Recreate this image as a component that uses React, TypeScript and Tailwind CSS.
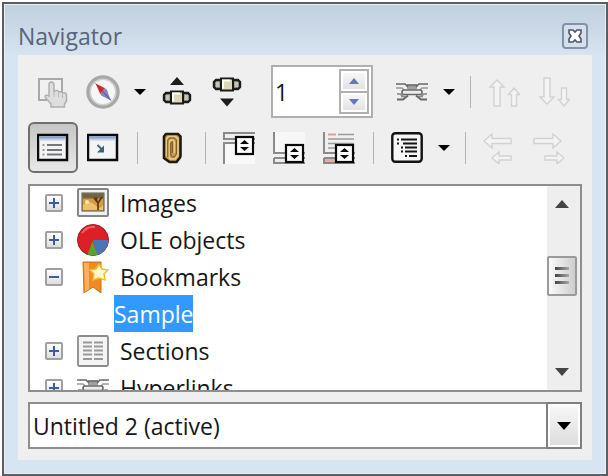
import * as React from "react";
import { clsx } from "clsx";

type IconProps = { className?: string; children: React.ReactNode };

function Icon({ className, children }: IconProps) {
  return (
    <svg
      viewBox="0 0 32 32"
      fill="none"
      aria-hidden="true"
      className={clsx("size-8 shrink-0", className)}
    >
      {children}
    </svg>
  );
}

function ToggleIcon() {
  return (
    <Icon>
      <rect x="2" y="3" width="23" height="21" fill="#f1f1f1" stroke="#a8a8a8" strokeWidth="2" />
      <path
        d="M12 20V9q0-3 2.500-3T17 9v7q1-2 3-1.500t2 1.500q2-1 3.500 1 3.500-1 4 2v6l-2 3v3H14v-3l-6-7q0-3 4-1z"
        fill="#dedede"
        stroke="#b0b0b0"
        strokeWidth="1.500"
      />
      <path d="M17 16v5M21.500 17v4M25.500 18v4" stroke="#b8b8b8" />
    </Icon>
  );
}

function CompassIcon() {
  return (
    <Icon className="size-[34px]">
      <circle cx="16" cy="16" r="14" fill="#f6f6f6" stroke="#a8a8a8" strokeWidth="3.500" />
      <circle cx="16" cy="16" r="12" stroke="#d0d0d0" strokeWidth="1.500" />
      <path d="M9 8l9 4.500-4.500 5.500z" fill="#dd2a2c" />
      <path d="M19 13l4.500 11L14 19z" fill="#6f8ac6" />
      <path d="M13.500 18l4.500-5.500 2.500 3-3.500 5z" fill="#7f86c0" />
      <path d="M9 8l14.500 16" stroke="#7b2b40" strokeWidth=".7" />
    </Icon>
  );
}

function Barrel() {
  return (
    <>
      <path d="M5 3h22l2 2v5l-2 2H5l-2-2V5z" fill="#a5a596" stroke="#1c1c1c" strokeWidth="2.400" />
      <path d="M5 5h3v5H5zM24 5h3v5h-3z" fill="#c4c4bc" />
      <rect x="10" y="1.500" width="12" height="12" fill="#ddd7ba" stroke="#1a1a1a" strokeWidth="2" />
      <path d="M12 11.500V3.500h7" stroke="#fffdf0" strokeWidth="2" />
    </>
  );
}

function PreviousIcon() {
  return (
    <Icon>
      <path d="M16 1l7 8H9z" fill="#1d1d1d" />
      <g transform="translate(0 14)">
        <Barrel />
      </g>
    </Icon>
  );
}

function NextIcon() {
  return (
    <Icon>
      <g transform="translate(0 1)">
        <Barrel />
      </g>
      <path d="M16 30.500l-7-8h14z" fill="#1d1d1d" />
    </Icon>
  );
}

function ChainIcon() {
  return (
    <Icon>
      <path d="M11 8.500h10v5H11z" fill="#a0a0a0" />
      <g stroke="#686868" strokeWidth="1.600">
        <path d="M0 8h9l3 3M32 8h-9l-3 3M11 9h10" />
        <path d="M0 12h6l2 2M32 12h-6l-2 2" stroke="#999" />
        <rect x="6" y="14" width="20" height="4.500" rx="2" fill="#ececec" />
        <path d="M1 18h3l3 2M31 18h-3l-3 2" stroke="#888" />
        <path d="M1 23.500h6l5-4M31 23.500h-6l-5-4" strokeWidth="2" />
        <path d="M5 20.500h5M27 20.500h-5" stroke="#888" />
      </g>
    </Icon>
  );
}

const arrowShapes = {
  up: "M9 4l7 7h-4v19H6V11H2zM26 12l5.500 6.500h-3V30h-5V18.500h-3z",
  down: "M9 28l7-7h-4V2H6v19H2zM26 30l5.500-6.500h-3V12h-5v11.500h-3z",
  left: "M1 9l8-7v4.500h19v5H9V16zM9 26l7-6v4h12v4H16v4z",
  right: "M28 9l-8-7v4.500H1v5h19V16zM31 26l-7-6v4H12v4h12v4z",
};

function ArrowPair({ direction }: { direction: keyof typeof arrowShapes }) {
  return (
    <Icon>
      <path d={arrowShapes[direction]} fill="#f4f4f4" stroke="#d2d2d2" strokeWidth="1.400" />
    </Icon>
  );
}

function PaneFrame() {
  return (
    <>
      <rect x="1" y="3" width="29" height="25" fill="#f2f4f6" stroke="#0b0b0b" strokeWidth="2.500" />
      <path d="M2.500 5.500h26" stroke="#8da5c8" strokeWidth="2.500" />
      <path d="M2.500 7.800h26" stroke="#c4d0e0" strokeWidth="1.500" />
    </>
  );
}

function ListBoxIcon() {
  return (
    <Icon>
      <PaneFrame />
      <path d="M10 13h15M10 18h15M10 22.500h15" stroke="#777" strokeWidth="1.800" />
      <path d="M5.500 13h2M5.500 18h2M5.500 22.500h2" stroke="#999" strokeWidth="1.800" />
    </Icon>
  );
}

function ContentViewIcon() {
  return (
    <Icon>
      <PaneFrame />
      <path d="M10.500 13l5 5" stroke="#44677f" strokeWidth="2" />
      <path d="M17 13.500v7h-7z" fill="#3d6079" />
    </Icon>
  );
}

function ReminderIcon() {
  return (
    <Icon>
      <path
        d="M11 2h12l2.500 2.500V24q0 2-2 3.500l-2 2.500h-7l-5.500-4V4.500z"
        fill="#c9a05a"
        stroke="#1f1a12"
        strokeWidth="2.600"
      />
      <path
        d="M11.500 24V7l2-2.500h7L23 7v16l-3 4h-4.500l-1.500-2V10.500L16 8h2l1.500 2.500V21"
        stroke="#ecc987"
        strokeWidth="1.500"
      />
      <path d="M12.800 25V8l1.500-2h5l2 2v14l-2 3h-2l-1.500-2V11l1.500-1.500V21" stroke="#6e5222" />
    </Icon>
  );
}

function StepBox({ x, y }: { x: number; y: number }) {
  return (
    <g transform={`translate(${x} ${y})`}>
      <rect x="1" y="1" width="17" height="17" fill="#fff" stroke="#080808" strokeWidth="2.200" />
      <path d="M9.500 4L14 8H5zM9.500 15L14 11H5z" fill="#080808" />
    </g>
  );
}

function HeaderIcon() {
  return (
    <Icon>
      <path d="M2 11h30v21H2z" fill="#f8f8f8" />
      <path d="M1 7V1h31M0 7h32M1 32V11h31" stroke="#8a8a8a" strokeWidth="2" />
      <StepBox x={12} y={4} />
    </Icon>
  );
}

function FooterIcon() {
  return (
    <Icon>
      <path d="M2 0h30v20H2z" fill="#f7f7f7" />
      <path d="M1 0v21h31M1 26h31M1 26v5h31" stroke="#8a8a8a" strokeWidth="2" />
      <StepBox x={12} y={12} />
    </Icon>
  );
}

function AnchorTextIcon() {
  return (
    <Icon>
      <path d="M1 0v21h31M1 26h31M1 26v5h31" stroke="#8a8a8a" strokeWidth="2" />
      <path d="M5 2.500h8" stroke="#d9a098" strokeWidth="2" />
      <path d="M15 2.500h16M5 7h26M5 11.500h26M5 16h8" stroke="#9b9b9b" strokeWidth="1.700" />
      <path d="M2 27h11v3H2z" fill="#e6aca3" />
      <StepBox x={12} y={12} />
    </Icon>
  );
}

function HeadingLevelsIcon() {
  return (
    <Icon>
      <rect x="1.300" y="1.300" width="29.400" height="28.400" rx="3" fill="#f5f5f5" stroke="#111" strokeWidth="2.400" />
      <g stroke="#151515" strokeWidth="1.800">
        <path d="M6 7.500h2M10 7.500h16M6 11.500h2M12 11.500h14" />
        <path d="M10 15.500h2M14 15.500h12M10 19.500h2M14 19.500h12M14 24h2M18 24h8" />
      </g>
    </Icon>
  );
}

function PictureIcon() {
  return (
    <Icon>
      <rect x="1" y="2" width="30" height="27" rx="1" fill="#f1f1f1" stroke="#858585" strokeWidth="2" />
      <rect x="5" y="6" width="22" height="18" fill="#d59a43" stroke="#555" />
      <path d="M5.500 6.500h21v5h-21z" fill="#72643f" />
      <path d="M6 18q6-6 12 0t8-1v6H6z" fill="#efc16b" />
      <circle cx="10" cy="15" r="2" fill="#ffeeb0" />
      <path d="M21 23v-7l-4-5M21 16l4-6M20 14l-1-4" stroke="#5b3515" strokeWidth="1.600" />
    </Icon>
  );
}

function ChartIcon() {
  return (
    <Icon>
      <circle cx="16" cy="16" r="15.500" fill="#dc2025" stroke="#9f1a20" />
      <path d="M16 16h15.500A15.500 15.500 0 0 1 20 31z" fill="#4877b3" />
      <path d="M15.500 17l5 14q-5 1-10-.5z" fill="#57a52e" />
      <path d="M5 9q5-7 13-6" stroke="#f0605f" strokeWidth="2" />
    </Icon>
  );
}

function BookmarkIcon() {
  return (
    <Icon>
      <path d="M6 1h18v31l-8-6-9 6z" fill="#f18a25" stroke="#c9701a" />
      <path d="M7 2h5v26l-4 3z" fill="#f8b063" />
      <path
        d="M22 3l3 5 6 1-4 4 1 6-6-2-6 2 1-6-4-4 6-1z"
        fill="#fff9cc"
        stroke="#eebf2c"
        strokeWidth="1.500"
      />
    </Icon>
  );
}

function SectionIcon() {
  return (
    <Icon>
      <rect x="1" y="1" width="30" height="30" rx="1.500" fill="#f4f4f4" stroke="#8b8b8b" strokeWidth="1.800" />
      <path
        d="M6 7.500h9M6 11.500h9M6 15.500h9M6 19.500h9M6 24h9M17 7.500h9M17 11.500h9M17 15.500h9M17 19.500h9M17 24h9"
        stroke="#999"
        strokeWidth="2"
      />
    </Icon>
  );
}

interface ToolButtonProps extends React.ButtonHTMLAttributes<HTMLButtonElement> {
  label: string;
}

function ToolButton({ label, className, ...props }: ToolButtonProps) {
  return (
    <button
      type="button"
      aria-label={label}
      title={label}
      className={clsx("flex h-[51px] w-[50px] shrink-0 items-center justify-center", className)}
      {...props}
    />
  );
}

function MenuButton({ label }: { label: string }) {
  return (
    <button type="button" aria-label={label} className="flex h-[51px] w-6 shrink-0 items-center justify-center">
      <svg viewBox="0 0 12 6" className="h-1.5 w-3" aria-hidden="true">
        <path d="M0 0h12L6 6z" fill="#000" />
      </svg>
    </button>
  );
}

function Separator() {
  return (
    <span role="separator" className="flex w-[18px] shrink-0 justify-center">
      <span className="h-8 w-px bg-[#b4b4b4]" />
    </span>
  );
}

function PageSpinner() {
  const [page, setPage] = React.useState(1);
  const steps = [
    { label: "Next page", delta: 1, path: "M5 0l5 6H0z" },
    { label: "Previous page", delta: -1, path: "M5 6L0 0h10z" },
  ];

  return (
    <div className="ml-[19px] mr-3.5 flex h-[53px] w-[102px] shrink-0 border-2 border-[#b0b0b0] bg-white p-0.5">
      <input
        aria-label="Page number"
        inputMode="numeric"
        value={page}
        onChange={(e) => setPage(Number(e.target.value) || 1)}
        className="min-w-0 flex-1 bg-transparent outline-none"
      />
      <div className="flex w-[30px] flex-col gap-0.5 border-2 border-[#b0b0b0] bg-[#b0b0b0]">
        {steps.map((step) => (
          <button
            key={step.label}
            type="button"
            aria-label={step.label}
            onClick={() => setPage((p) => Math.max(1, p + step.delta))}
            className="flex flex-1 items-center justify-center border-2 border-white bg-linear-to-b from-[#f7f7f7] to-[#e3e3e3]"
          >
            <svg viewBox="0 0 10 6" className="h-1.5 w-2.5" aria-hidden="true">
              <path d={step.path} fill="#6377ba" />
            </svg>
          </button>
        ))}
      </div>
    </div>
  );
}

const categories = [
  { name: "Images", icon: <PictureIcon /> },
  { name: "OLE objects", icon: <ChartIcon /> },
  { name: "Bookmarks", icon: <BookmarkIcon />, children: ["Sample"] },
  { name: "Sections", icon: <SectionIcon /> },
  { name: "Hyperlinks", icon: <ChainIcon /> },
];

function CategoryTree() {
  return (
    <div className="min-w-0 flex-1 overflow-hidden">
      <ul role="tree" aria-label="Document contents" className="-mt-0.5">
        {categories.map((category) => (
          <li key={category.name} role="treeitem" aria-expanded={!!category.children}>
            <div className="flex h-[37px] items-center pl-[15px]">
              <button
                type="button"
                aria-label={`${category.children ? "Collapse" : "Expand"} ${category.name}`}
                className="flex size-[18px] shrink-0 items-center justify-center rounded-xs border-2 border-[#a0a0a0] bg-linear-to-b from-white to-[#dedede]"
              >
                <svg viewBox="0 0 10 10" className="size-2.5" aria-hidden="true">
                  <path d={category.children ? "M0 5h10" : "M0 5h10M5 0v10"} stroke="#3f5ba0" strokeWidth="2" />
                </svg>
              </button>
              <span className="ml-3.5 mr-[11px] flex">{category.icon}</span>
              <span className="whitespace-nowrap">{category.name}</span>
            </div>
            {category.children && (
              <ul role="group">
                {category.children.map((child) => (
                  <li key={child} role="treeitem" aria-selected="true" className="flex h-[37px] pl-[84px]">
                    <span className="flex items-center bg-[#3399ff] text-white">{child}</span>
                  </li>
                ))}
              </ul>
            )}
          </li>
        ))}
      </ul>
    </div>
  );
}

function ScrollColumn() {
  return (
    <div className="flex w-[33px] shrink-0 flex-col bg-[#eeeeee] pr-[3px]">
      <button type="button" aria-label="Scroll up" className="flex h-9 items-center justify-center">
        <svg viewBox="0 0 14 8" className="h-2 w-3.5" aria-hidden="true">
          <path d="M7 0l7 8H0z" fill="#444" />
        </svg>
      </button>
      <div className="flex-[34]" />
      <div className="flex h-10 flex-col items-center justify-center gap-1 rounded-xs border-2 border-[#9a9a9a] bg-linear-to-r from-[#fafafa] to-[#cecece]">
        <span className="h-[3px] w-3.5 bg-linear-to-r from-[#444] to-[#aaa]" />
        <span className="h-[3px] w-3.5 bg-linear-to-r from-[#444] to-[#aaa]" />
        <span className="h-[3px] w-3.5 bg-linear-to-r from-[#444] to-[#aaa]" />
      </div>
      <div className="flex-[59]" />
      <button type="button" aria-label="Scroll down" className="flex h-9 items-center justify-center">
        <svg viewBox="0 0 14 8" className="h-2 w-3.5" aria-hidden="true">
          <path d="M7 8L0 0h14z" fill="#444" />
        </svg>
      </button>
    </div>
  );
}

export default function App() {
  return (
    <div className="flex h-screen flex-col bg-white pl-0.5 pt-0.5 font-['Open_Sans','Noto_Sans',sans-serif] text-[23px] leading-8 text-[#161616]">
      <section
        aria-labelledby="navigator-title"
        className="flex min-h-0 flex-1 flex-col border-2 border-[#5d5d60] bg-[#d7e4f1] bg-linear-to-b from-[#c0cfde] to-[#d7e4f1] to-[52px] px-3.5 pb-3.5 inset-shadow-[0_0_0_1px_#e6eef6]"
      >
        <header className="flex h-[51px] shrink-0 items-center justify-between pr-1 pt-3">
          <h1 id="navigator-title" className="text-[#59647a]">
            Navigator
          </h1>
          <button
            type="button"
            aria-label="Close"
            className="flex size-[26px] items-center justify-center rounded-sm border-2 border-[#8292a9] bg-[#d5e0ec]"
          >
            <svg viewBox="0 0 14 14" className="size-3.5" aria-hidden="true">
              <path
                d="M1 1h4l2 2 2-2h4v3l-2 3 2 3v3H9l-2-2-2 2H1v-3l2-3-2-3z"
                fill="#fff"
                stroke="#4d5665"
                strokeWidth="1.600"
              />
              <path d="M4 4l6 6M10 4l-6 6" stroke="#fff" strokeWidth="2" />
            </svg>
          </button>
        </header>

        <main className="flex min-h-0 flex-1 flex-col bg-[#efefef] px-2.5 pb-[11px] pt-2.5">
          <div role="toolbar" aria-label="Navigation" className="flex h-[53px] shrink-0 items-center">
            <ToolButton label="Toggle" disabled>
              <ToggleIcon />
            </ToolButton>
            <ToolButton label="Navigation">
              <CompassIcon />
            </ToolButton>
            <MenuButton label="Navigation options" />
            <ToolButton label="Previous">
              <PreviousIcon />
            </ToolButton>
            <ToolButton label="Next">
              <NextIcon />
            </ToolButton>
            <PageSpinner />
            <ToolButton label="Drag mode">
              <ChainIcon />
            </ToolButton>
            <MenuButton label="Drag mode options" />
            <Separator />
            <ToolButton label="Promote chapter" disabled>
              <ArrowPair direction="up" />
            </ToolButton>
            <ToolButton label="Demote chapter" disabled>
              <ArrowPair direction="down" />
            </ToolButton>
          </div>

          <div role="toolbar" aria-label="Document" className="mt-1 flex h-[51px] shrink-0 items-center">
            <ToolButton
              label="List box on/off"
              aria-pressed="true"
              className="rounded-md border-2 border-[#707070] bg-linear-to-b from-[#c6c6c6] to-[#e8e8e8]"
            >
              <ListBoxIcon />
            </ToolButton>
            <ToolButton label="Content view">
              <ContentViewIcon />
            </ToolButton>
            <Separator />
            <ToolButton label="Set reminder">
              <ReminderIcon />
            </ToolButton>
            <Separator />
            <ToolButton label="Header">
              <HeaderIcon />
            </ToolButton>
            <ToolButton label="Footer">
              <FooterIcon />
            </ToolButton>
            <ToolButton label="Anchor and text">
              <AnchorTextIcon />
            </ToolButton>
            <Separator />
            <ToolButton label="Heading levels shown">
              <HeadingLevelsIcon />
            </ToolButton>
            <MenuButton label="Heading level options" />
            <Separator />
            <ToolButton label="Promote level" disabled>
              <ArrowPair direction="left" />
            </ToolButton>
            <ToolButton label="Demote level" disabled>
              <ArrowPair direction="right" />
            </ToolButton>
          </div>

          <div className="mt-[11px] flex min-h-0 flex-1 border-2 border-[#8e8e8e] bg-white">
            <CategoryTree />
            <ScrollColumn />
          </div>

          <div className="relative mt-2.5 flex h-[47px] shrink-0">
            <select
              aria-label="Document"
              className="w-full appearance-none border-2 border-[#8e8e8e] bg-white pl-[3px] pr-10 outline-none"
            >
              <option>Untitled 2 (active)</option>
            </select>
            <span className="pointer-events-none absolute inset-y-0 right-0 flex w-9 items-center justify-center border-2 border-[#808080] bg-linear-to-b from-[#f8f8f8] to-[#dcdcdc] inset-shadow-[0_0_0_2px_#ffffff]">
              <svg viewBox="0 0 14 8" className="h-2 w-3.5" aria-hidden="true">
                <path d="M0 0h14L7 8z" fill="#000" />
              </svg>
            </span>
          </div>
        </main>
      </section>
    </div>
  );
}
